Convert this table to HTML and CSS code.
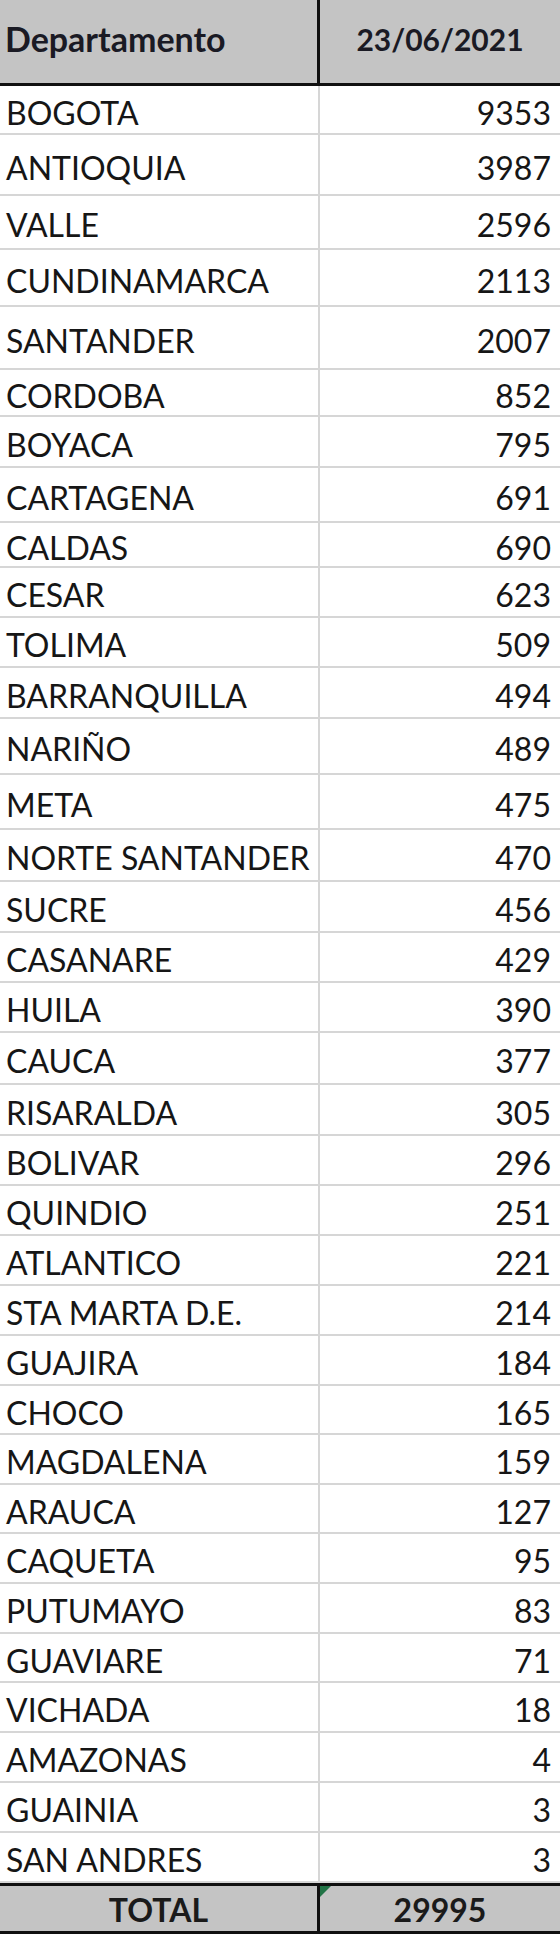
FILE: index.html
```html
<!DOCTYPE html>
<html lang="es">
<head>
<meta charset="utf-8">
<title>Departamento 23/06/2021</title>
<link rel="stylesheet" href="styles.css">
</head>
<body>
<div class="sheet">
  <div class="row head"><div class="cell name">Departamento</div><div class="cell date">23/06/2021</div></div>
  <div class="row"><div class="cell name">BOGOTA</div><div class="cell num">9353</div></div>
  <div class="row"><div class="cell name">ANTIOQUIA</div><div class="cell num">3987</div></div>
  <div class="row"><div class="cell name">VALLE</div><div class="cell num">2596</div></div>
  <div class="row"><div class="cell name">CUNDINAMARCA</div><div class="cell num">2113</div></div>
  <div class="row"><div class="cell name">SANTANDER</div><div class="cell num">2007</div></div>
  <div class="row"><div class="cell name">CORDOBA</div><div class="cell num">852</div></div>
  <div class="row"><div class="cell name">BOYACA</div><div class="cell num">795</div></div>
  <div class="row"><div class="cell name">CARTAGENA</div><div class="cell num">691</div></div>
  <div class="row"><div class="cell name">CALDAS</div><div class="cell num">690</div></div>
  <div class="row"><div class="cell name">CESAR</div><div class="cell num">623</div></div>
  <div class="row"><div class="cell name">TOLIMA</div><div class="cell num">509</div></div>
  <div class="row"><div class="cell name">BARRANQUILLA</div><div class="cell num">494</div></div>
  <div class="row"><div class="cell name">NARIÑO</div><div class="cell num">489</div></div>
  <div class="row"><div class="cell name">META</div><div class="cell num">475</div></div>
  <div class="row"><div class="cell name">NORTE SANTANDER</div><div class="cell num">470</div></div>
  <div class="row"><div class="cell name">SUCRE</div><div class="cell num">456</div></div>
  <div class="row"><div class="cell name">CASANARE</div><div class="cell num">429</div></div>
  <div class="row"><div class="cell name">HUILA</div><div class="cell num">390</div></div>
  <div class="row"><div class="cell name">CAUCA</div><div class="cell num">377</div></div>
  <div class="row"><div class="cell name">RISARALDA</div><div class="cell num">305</div></div>
  <div class="row"><div class="cell name">BOLIVAR</div><div class="cell num">296</div></div>
  <div class="row"><div class="cell name">QUINDIO</div><div class="cell num">251</div></div>
  <div class="row"><div class="cell name">ATLANTICO</div><div class="cell num">221</div></div>
  <div class="row"><div class="cell name">STA MARTA D.E.</div><div class="cell num">214</div></div>
  <div class="row"><div class="cell name">GUAJIRA</div><div class="cell num">184</div></div>
  <div class="row"><div class="cell name">CHOCO</div><div class="cell num">165</div></div>
  <div class="row"><div class="cell name">MAGDALENA</div><div class="cell num">159</div></div>
  <div class="row"><div class="cell name">ARAUCA</div><div class="cell num">127</div></div>
  <div class="row"><div class="cell name">CAQUETA</div><div class="cell num">95</div></div>
  <div class="row"><div class="cell name">PUTUMAYO</div><div class="cell num">83</div></div>
  <div class="row"><div class="cell name">GUAVIARE</div><div class="cell num">71</div></div>
  <div class="row"><div class="cell name">VICHADA</div><div class="cell num">18</div></div>
  <div class="row"><div class="cell name">AMAZONAS</div><div class="cell num">4</div></div>
  <div class="row"><div class="cell name">GUAINIA</div><div class="cell num">3</div></div>
  <div class="row"><div class="cell name">SAN ANDRES</div><div class="cell num">3</div></div>
  <div class="row total"><div class="cell label">TOTAL</div><div class="cell sum"><span class="flag"></span>29995</div></div>
</div>
</body>
</html>
```

FILE: styles.css
```css
html, body {
  margin: 0;
  padding: 0;
  background: #ffffff;
}

body {
  width: 560px;
  height: 1934px;
  overflow: hidden;
  font-family: Lato, "Open Sans", "Liberation Sans", sans-serif;
  color: #161616;
}

.sheet {
  display: grid;
  width: 560px;
  grid-template-rows:
    86px 49px 61px 54px 57px 63px 47px 51px 55px 45px
    50px 50px 51px 56px 55px 52px 51px 50px 50px 52px
    51px 50px 50px 50px 50px 50px 49px 50px 49px 50px
    50px 49px 50px 50px 50px 50px 51px;
}

.row {
  display: grid;
  grid-template-columns: 320px 240px;
  box-sizing: border-box;
  border-bottom: 2px solid #d6d6d6;
}

.cell {
  display: flex;
  align-items: center;
  box-sizing: border-box;
  padding-top: 6px;
  font-size: 32px;
  line-height: 1;
  white-space: nowrap;
}

.name {
  padding-left: 6px;
  border-right: 2px solid #d6d6d6;
}

.num {
  justify-content: flex-end;
  padding-right: 9px;
}

.head {
  background: #c4c4c4;
  border-bottom: 3px solid #101010;
}

.head .cell {
  padding-top: 0;
  padding-bottom: 6px;
  font-weight: 700;
  color: #1a1a24;
}

.head .name {
  padding-left: 5px;
  font-size: 34px;
  border-right: 3px solid #101010;
}

.date {
  justify-content: center;
  font-size: 30px;
}

.total {
  background: #c4c4c4;
  border-top: 3px solid #101010;
  border-bottom: 3px solid #101010;
}

.total .cell {
  padding-top: 2px;
  font-weight: 700;
  color: #1a1a1a;
  justify-content: center;
}

.label {
  border-right: 3px solid #101010;
}

.sum {
  position: relative;
}

.flag {
  position: absolute;
  top: 0;
  left: 0;
  width: 0;
  height: 0;
  border-top: 11px solid #217346;
  border-right: 11px solid transparent;
}
```
